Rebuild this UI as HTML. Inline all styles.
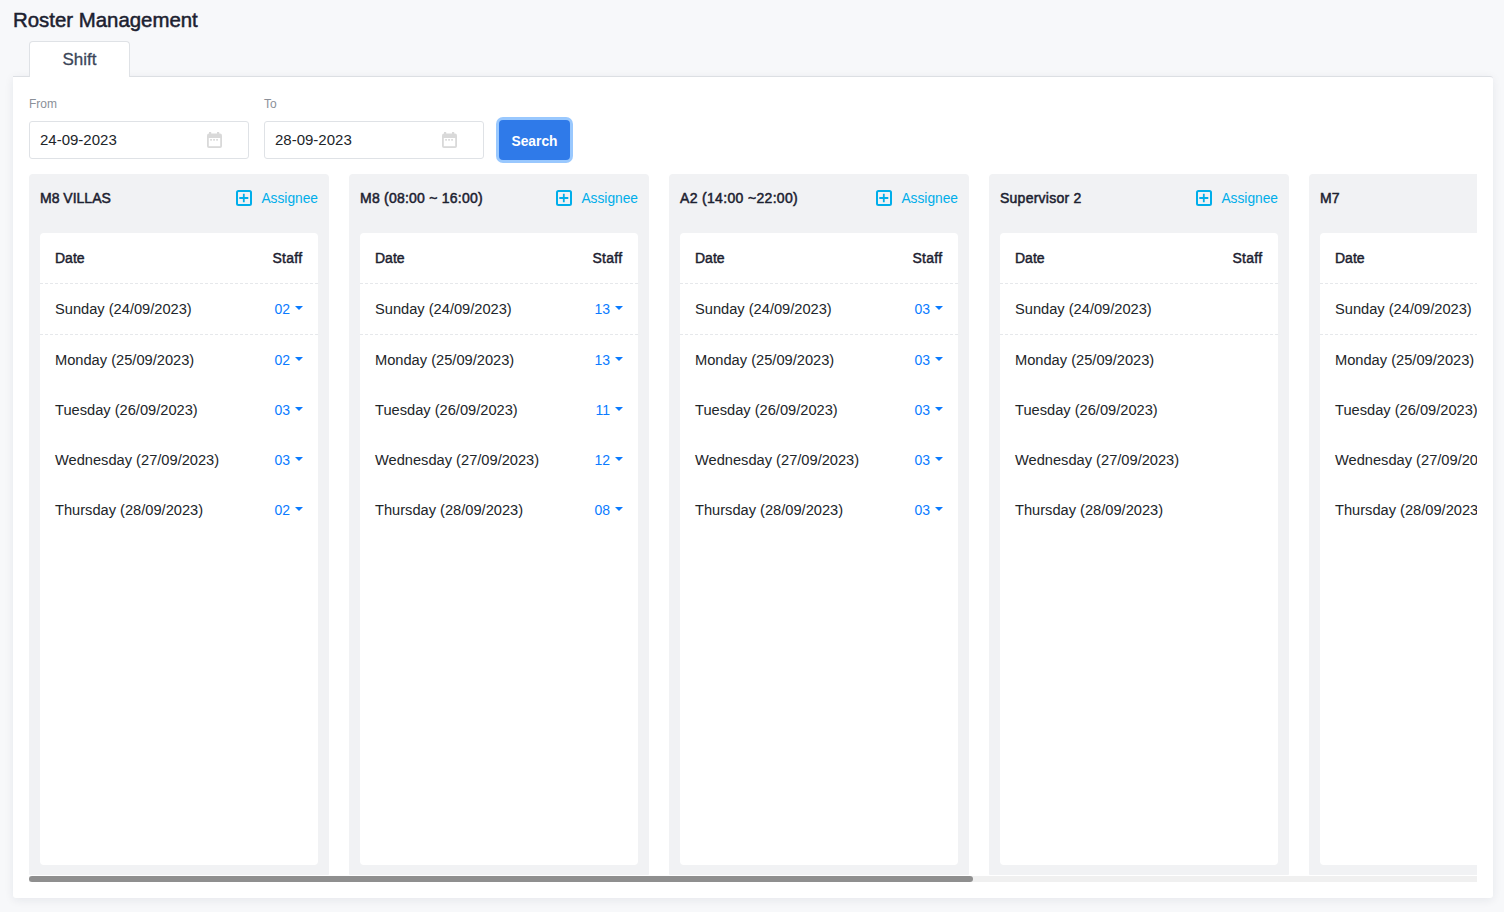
<!DOCTYPE html>
<html><head><meta charset="utf-8">
<style>
*{box-sizing:border-box;margin:0;padding:0}
html,body{width:1504px;height:912px;overflow:hidden}
body{background:#f7f8fa;font-family:"Liberation Sans",sans-serif;position:relative;color:#1f2430}
.abs{position:absolute}
.title{position:absolute;left:13px;top:8px;font-size:20.4px;font-weight:400;-webkit-text-stroke:0.5px #1c2130;color:#1c2130;line-height:24px;white-space:nowrap}
.tab{position:absolute;left:29px;top:41px;width:101px;height:36px;background:#fff;border:1px solid #dfe2e6;border-bottom:none;border-radius:4px 4px 0 0;z-index:2;font-size:17px;color:#3b4659;-webkit-text-stroke:0.3px #3b4659;text-align:center;line-height:36px}
.card{position:absolute;left:13px;top:76px;width:1480px;height:822px;background:#fff;border-top:1px solid #dcdfe3;border-radius:0 3px 3px 3px;box-shadow:0 2px 10px rgba(30,40,60,.08)}
.lbl{position:absolute;font-size:12px;color:#8b9099;line-height:14px}
.inp{position:absolute;top:121px;width:220px;height:38px;border:1px solid #dfe2e6;border-radius:3px;background:#fff;font-size:15px;color:#212529;line-height:36px;padding-left:10px}
.cal{position:absolute;top:132px;width:15px;height:16px}
.btn{position:absolute;left:499px;top:120px;width:71px;height:40px;background:#2f7ae9;border-radius:4px;box-shadow:0 0 0 3px #99c8fe;color:#fff;font-weight:700;font-size:13.8px;text-align:center;line-height:43px}
.scroller{position:absolute;left:29px;top:174px;width:1448px;height:708px;overflow:hidden}
.col{position:absolute;top:0;width:300px;height:701px;background:#f1f2f4;border-radius:4px 4px 1px 1px}
.ch{position:absolute;left:11px;top:14px;font-size:14px;font-weight:400;-webkit-text-stroke:0.5px #1c2130;color:#1c2130;line-height:20px;white-space:nowrap}
.asg{position:absolute;right:11px;top:15px;font-size:13.75px;color:#00aeea;line-height:20px;white-space:nowrap}
.plus{position:absolute;left:207px;top:16px;width:16px;height:16px}
.inner{position:absolute;left:11px;top:59px;width:278px;height:632px;background:#fff;border-radius:4px;overflow:hidden}
.row{position:absolute;left:0;width:278px;height:50px}
.row .d{position:absolute;left:15px;top:0;line-height:50px;font-size:14.65px;color:#212529;white-space:nowrap}
.row .s{position:absolute;right:15px;top:0;line-height:50px;font-size:14px;color:#0a7bff;white-space:nowrap}
.hd .d,.hd .s{font-weight:400;-webkit-text-stroke:0.45px #1c2130;color:#1c2130;font-size:14px}
.dash{position:absolute;left:0;width:278px;height:1px;background:repeating-linear-gradient(90deg,#e6e8eb 0 3px,transparent 3px 5px)}
.caret{display:inline-block;width:0;height:0;border-left:4px solid transparent;border-right:4px solid transparent;border-top:4px solid #0a7bff;vertical-align:middle;margin-left:5px;position:relative;top:-2px}
.track{position:absolute;left:29px;top:876px;width:1448px;height:6px;background:#f0f0f0}
.thumb{position:absolute;left:29px;top:876px;width:944px;height:6px;background:#8f8f8f;border-radius:3px}
</style></head>
<body>
<div class="title">Roster Management</div>
<div class="tab">Shift</div>
<div class="card"></div>
<div class="lbl" style="left:29px;top:97px">From</div>
<div class="lbl" style="left:264px;top:97px">To</div>
<div class="inp" style="left:29px">24-09-2023</div>
<div class="inp" style="left:264px">28-09-2023</div>
<svg class="cal" style="left:207px" viewBox="0 0 15 16"><rect x="0" y="1.5" width="15" height="14.5" rx="2" fill="#d9d9d9"/><rect x="2" y="0" width="2.2" height="2" fill="#d9d9d9"/><rect x="10" y="0" width="2.2" height="2" fill="#d9d9d9"/><rect x="1.8" y="6" width="11.4" height="8.2" fill="#fff"/><rect x="3.2" y="7" width="1.7" height="1.7" fill="#d9d9d9"/><rect x="6.2" y="7" width="1.7" height="1.7" fill="#d9d9d9"/><rect x="9.2" y="7" width="1.7" height="1.7" fill="#d9d9d9"/></svg>
<svg class="cal" style="left:442px" viewBox="0 0 15 16"><rect x="0" y="1.5" width="15" height="14.5" rx="2" fill="#d9d9d9"/><rect x="2" y="0" width="2.2" height="2" fill="#d9d9d9"/><rect x="10" y="0" width="2.2" height="2" fill="#d9d9d9"/><rect x="1.8" y="6" width="11.4" height="8.2" fill="#fff"/><rect x="3.2" y="7" width="1.7" height="1.7" fill="#d9d9d9"/><rect x="6.2" y="7" width="1.7" height="1.7" fill="#d9d9d9"/><rect x="9.2" y="7" width="1.7" height="1.7" fill="#d9d9d9"/></svg>
<div class="btn">Search</div>
<div class="scroller" id="sc">
<div class="col" style="left:0px"><div class="ch">M8 VILLAS</div><svg class="plus" viewBox="0 0 16 16"><rect x="1" y="1" width="14" height="14" rx="1.5" fill="none" stroke="#00aeea" stroke-width="2"/><path d="M3.3 8H12.3M7.8 3.7V12.3" stroke="#00aeea" stroke-width="1.8"/></svg><div class="asg">Assignee</div><div class="inner"><div class="row hd" style="top:0"><span class="d">Date</span><span class="s" style="letter-spacing:0.3px;right:15.5px">Staff</span></div><div class="dash" style="top:50px"></div><div class="row" style="top:51px"><span class="d">Sunday (24/09/2023)</span><span class="s">02<i class="caret"></i></span></div><div class="dash" style="top:101px"></div><div class="row" style="top:102px"><span class="d">Monday (25/09/2023)</span><span class="s">02<i class="caret"></i></span></div><div class="row" style="top:152px"><span class="d">Tuesday (26/09/2023)</span><span class="s">03<i class="caret"></i></span></div><div class="row" style="top:202px"><span class="d">Wednesday (27/09/2023)</span><span class="s">03<i class="caret"></i></span></div><div class="row" style="top:252px"><span class="d">Thursday (28/09/2023)</span><span class="s">02<i class="caret"></i></span></div></div></div>
<div class="col" style="left:320px"><div class="ch" style="letter-spacing:0.23px">M8 (08:00 ~ 16:00)</div><svg class="plus" viewBox="0 0 16 16"><rect x="1" y="1" width="14" height="14" rx="1.5" fill="none" stroke="#00aeea" stroke-width="2"/><path d="M3.3 8H12.3M7.8 3.7V12.3" stroke="#00aeea" stroke-width="1.8"/></svg><div class="asg">Assignee</div><div class="inner"><div class="row hd" style="top:0"><span class="d">Date</span><span class="s" style="letter-spacing:0.3px;right:15.5px">Staff</span></div><div class="dash" style="top:50px"></div><div class="row" style="top:51px"><span class="d">Sunday (24/09/2023)</span><span class="s">13<i class="caret"></i></span></div><div class="dash" style="top:101px"></div><div class="row" style="top:102px"><span class="d">Monday (25/09/2023)</span><span class="s">13<i class="caret"></i></span></div><div class="row" style="top:152px"><span class="d">Tuesday (26/09/2023)</span><span class="s">11<i class="caret"></i></span></div><div class="row" style="top:202px"><span class="d">Wednesday (27/09/2023)</span><span class="s">12<i class="caret"></i></span></div><div class="row" style="top:252px"><span class="d">Thursday (28/09/2023)</span><span class="s">08<i class="caret"></i></span></div></div></div>
<div class="col" style="left:640px"><div class="ch" style="letter-spacing:0.33px">A2 (14:00 ~22:00)</div><svg class="plus" viewBox="0 0 16 16"><rect x="1" y="1" width="14" height="14" rx="1.5" fill="none" stroke="#00aeea" stroke-width="2"/><path d="M3.3 8H12.3M7.8 3.7V12.3" stroke="#00aeea" stroke-width="1.8"/></svg><div class="asg">Assignee</div><div class="inner"><div class="row hd" style="top:0"><span class="d">Date</span><span class="s" style="letter-spacing:0.3px;right:15.5px">Staff</span></div><div class="dash" style="top:50px"></div><div class="row" style="top:51px"><span class="d">Sunday (24/09/2023)</span><span class="s">03<i class="caret"></i></span></div><div class="dash" style="top:101px"></div><div class="row" style="top:102px"><span class="d">Monday (25/09/2023)</span><span class="s">03<i class="caret"></i></span></div><div class="row" style="top:152px"><span class="d">Tuesday (26/09/2023)</span><span class="s">03<i class="caret"></i></span></div><div class="row" style="top:202px"><span class="d">Wednesday (27/09/2023)</span><span class="s">03<i class="caret"></i></span></div><div class="row" style="top:252px"><span class="d">Thursday (28/09/2023)</span><span class="s">03<i class="caret"></i></span></div></div></div>
<div class="col" style="left:960px"><div class="ch" style="letter-spacing:0.25px">Supervisor 2</div><svg class="plus" viewBox="0 0 16 16"><rect x="1" y="1" width="14" height="14" rx="1.5" fill="none" stroke="#00aeea" stroke-width="2"/><path d="M3.3 8H12.3M7.8 3.7V12.3" stroke="#00aeea" stroke-width="1.8"/></svg><div class="asg">Assignee</div><div class="inner"><div class="row hd" style="top:0"><span class="d">Date</span><span class="s" style="letter-spacing:0.3px;right:15.5px">Staff</span></div><div class="dash" style="top:50px"></div><div class="row" style="top:51px"><span class="d">Sunday (24/09/2023)</span></div><div class="dash" style="top:101px"></div><div class="row" style="top:102px"><span class="d">Monday (25/09/2023)</span></div><div class="row" style="top:152px"><span class="d">Tuesday (26/09/2023)</span></div><div class="row" style="top:202px"><span class="d">Wednesday (27/09/2023)</span></div><div class="row" style="top:252px"><span class="d">Thursday (28/09/2023)</span></div></div></div>
<div class="col" style="left:1280px"><div class="ch">M7</div><div class="inner"><div class="row hd" style="top:0"><span class="d">Date</span><span class="s" style="letter-spacing:0.3px;right:15.5px">Staff</span></div><div class="dash" style="top:50px"></div><div class="row" style="top:51px"><span class="d">Sunday (24/09/2023)</span></div><div class="dash" style="top:101px"></div><div class="row" style="top:102px"><span class="d">Monday (25/09/2023)</span></div><div class="row" style="top:152px"><span class="d">Tuesday (26/09/2023)</span></div><div class="row" style="top:202px"><span class="d">Wednesday (27/09/2023)</span></div><div class="row" style="top:252px"><span class="d">Thursday (28/09/2023)</span></div></div></div>
</div>
<div class="track"></div>
<div class="thumb"></div>
</body></html>
